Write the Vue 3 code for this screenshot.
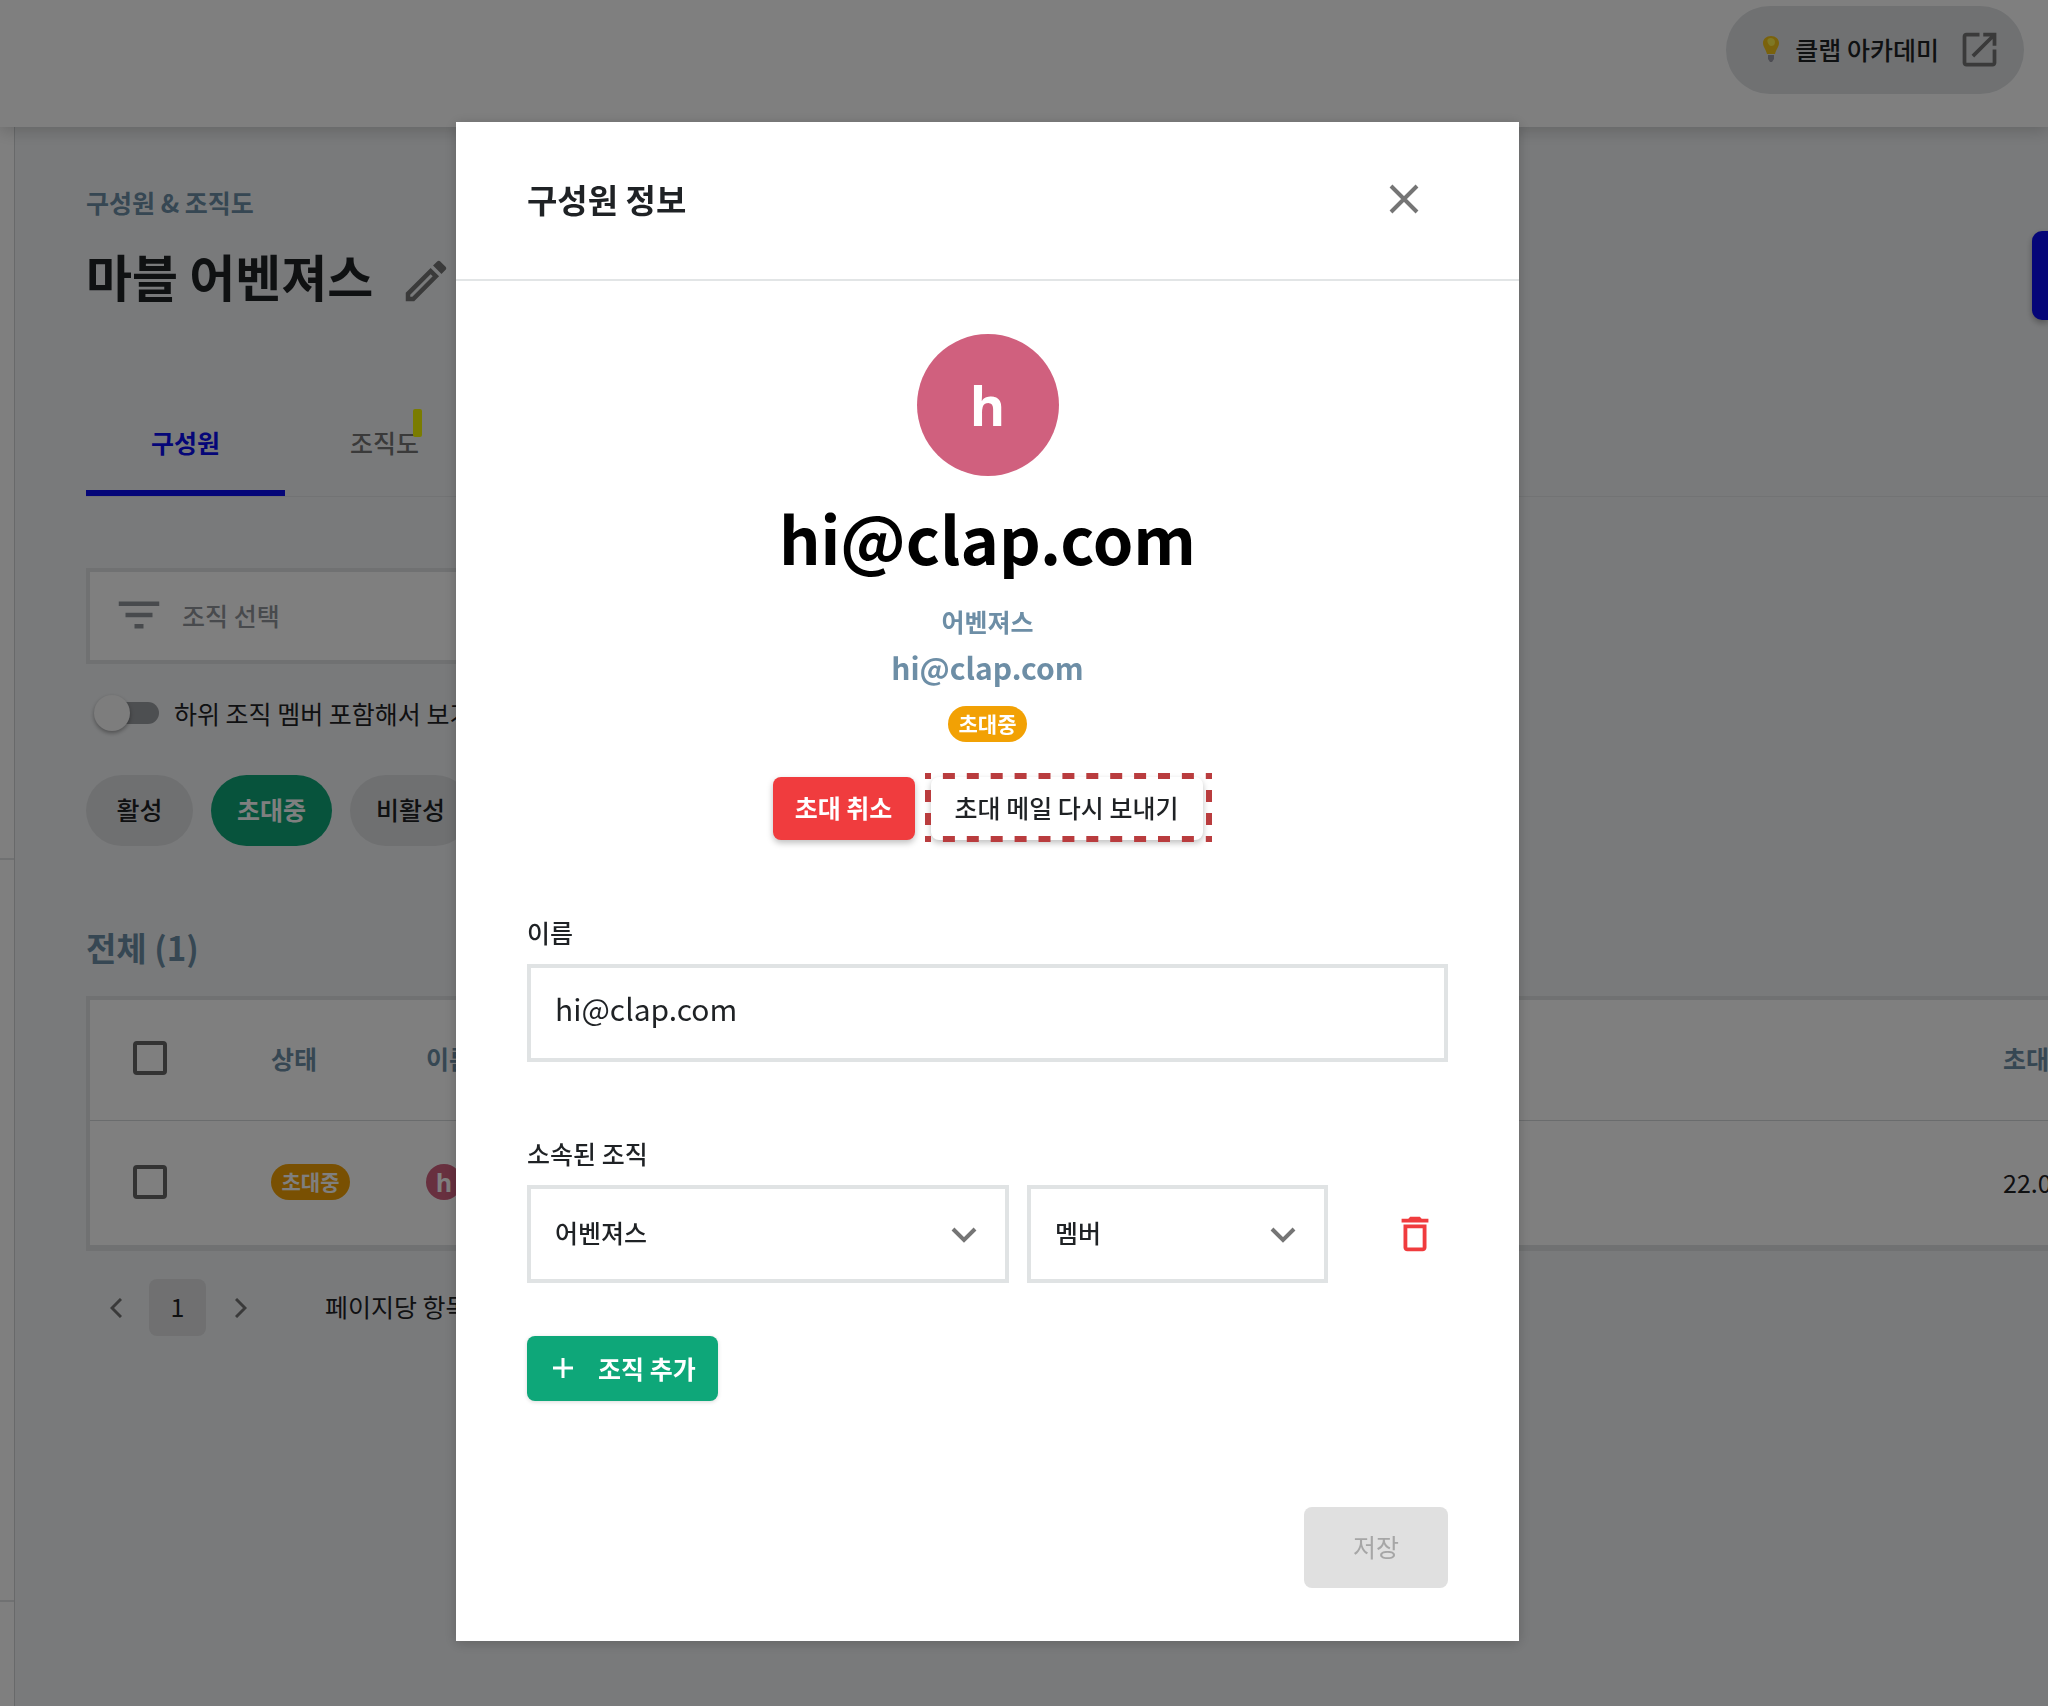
<script setup>
import { ref } from 'vue';

const name = ref('hi@clap.com');
const team = ref('어벤져스');
const role = ref('멤버');
const includeSub = ref(false);

const tabs = ['구성원', '조직도'];
const activeTab = ref('구성원');

const filters = ['활성', '초대중', '비활성'];
const activeFilter = ref('초대중');
</script>

<template>
    <div class="page">
        <header class="topbar">
            <a href="#" class="academy">
                <svg class="bulb" viewBox="0 0 16 26">
                    <path d="M8 0C3.400 0 0 3 0 7c0 4 3 6.500 4 11h8c1-4.500 4-7 4-11 0-4-3.400-7-8-7z" fill="#f5c518" />
                    <path d="M5 3c2-2 7-1 7 3 0 3-2 4-4 4S3 5 5 3z" fill="#fff04a" />
                    <path d="M5 19h6v4l-2 3H7l-2-3z" fill="#9a9aa6" />
                </svg>
                <span>클랩 아카데미</span>
                <svg class="open-icon" viewBox="0 0 24 24">
                    <path d="M19 19H5V5h7V3H5c-1.110 0-2 .9-2 2v14c0 1.100.89 2 2 2h14c1.100 0 2-.9 2-2v-7h-2v7zM14 3v2h3.590l-9.830 9.830 1.410 1.410L19 6.410V10h2V3h-7z" />
                </svg>
            </a>
        </header>

        <div class="body">
            <aside class="side">
                <div class="side-menu"></div>
                <div class="side-extra"></div>
            </aside>

            <main class="content">
                <div class="crumb">구성원 &amp; 조직도</div>
                <div class="title-row">
                    <h1>마블 어벤져스</h1>
                    <button class="icon-btn edit" aria-label="edit">
                        <svg class="edit-icon" viewBox="0 0 24 24">
                            <path d="M14.060 9.020l.92.92L5.920 19H5v-.92l9.060-9.060M17.660 3c-.25 0-.51.1-.7.29l-1.830 1.830 3.750 3.750 1.830-1.830c.39-.39.39-1.020 0-1.410l-2.340-2.340c-.2-.2-.45-.29-.71-.29zm-3.600 3.190L3 17.250V21h3.750L17.810 9.940l-3.750-3.750z" />
                        </svg>
                    </button>
                    <button class="invite" aria-label="invite"></button>
                </div>

                <nav class="tabs">
                    <button
                        v-for="tab in tabs"
                        :key="tab"
                        class="tab"
                        :class="{ active: tab === activeTab }"
                        @click="activeTab = tab"
                    >{{ tab }}</button>
                    <span class="marker"></span>
                </nav>

                <button class="team-filter">
                    <svg viewBox="0 0 24 24"><path d="M10 18h4v-2h-4v2zM3 6v2h18V6H3zm3 7h12v-2H6v2z" /></svg>
                    조직 선택
                </button>

                <label class="switch">
                    <input v-model="includeSub" type="checkbox">
                    <span class="track"></span>
                    하위 조직 멤버 포함해서 보기
                </label>

                <div class="chips">
                    <button
                        v-for="f in filters"
                        :key="f"
                        class="chip"
                        :class="{ active: f === activeFilter }"
                        @click="activeFilter = f"
                    >{{ f }}</button>
                </div>

                <h2 class="total">전체 (1)</h2>

                <table class="members">
                    <thead>
                        <tr>
                            <th class="col-check"><input type="checkbox" aria-label="all"></th>
                            <th class="col-state">상태</th>
                            <th>이름</th>
                            <th class="col-date">초대</th>
                        </tr>
                    </thead>
                    <tbody>
                        <tr>
                            <td class="col-check"><input type="checkbox" aria-label="hi@clap.com"></td>
                            <td class="col-state"><span class="badge">초대중</span></td>
                            <td><span class="avatar small">h</span></td>
                            <td class="col-date">22.0</td>
                        </tr>
                    </tbody>
                </table>

                <div class="pager">
                    <button class="page-arrow" aria-label="prev">
                        <svg viewBox="0 0 12 20"><path d="M11 1L2 10l9 9" /></svg>
                    </button>
                    <button class="page-num">1</button>
                    <button class="page-arrow" aria-label="next">
                        <svg viewBox="0 0 12 20"><path d="M1 1l9 9-9 9" /></svg>
                    </button>
                    <span class="per-page">페이지당 항목</span>
                </div>
            </main>
        </div>

        <div class="overlay">
            <section class="modal" role="dialog" aria-labelledby="modal-title">
                <header class="modal-head">
                    <h2 id="modal-title">구성원 정보</h2>
                    <button class="icon-btn" aria-label="close">
                        <svg class="close-icon" viewBox="0 0 30 30"><path d="M2 2l26 26M28 2L2 28" /></svg>
                    </button>
                </header>

                <div class="profile">
                    <span class="avatar">h</span>
                    <div class="profile-name">hi@clap.com</div>
                    <div class="profile-team">어벤져스</div>
                    <div class="profile-mail">hi@clap.com</div>
                    <span class="badge">초대중</span>
                    <div class="profile-actions">
                        <button class="btn danger">초대 취소</button>
                        <div class="highlight">
                            <button class="btn plain">초대 메일 다시 보내기</button>
                            <svg class="dashes" viewBox="0 0 287 69">
                                <path d="M0 3h287M0 66h287" stroke-dasharray="12 11.9" />
                                <path d="M3 0v69M284 0v69" stroke-dasharray="12 11" />
                            </svg>
                        </div>
                    </div>
                </div>

                <div class="form">
                    <label for="name" class="label">이름</label>
                    <input id="name" v-model="name" type="text" class="field">

                    <label for="team" class="label second">소속된 조직</label>
                    <div class="team-row">
                        <div class="select team">
                            <select id="team" v-model="team" class="field">
                                <option>어벤져스</option>
                            </select>
                            <svg viewBox="0 0 26 16"><path d="M2 2l11 11L24 2" /></svg>
                        </div>
                        <div class="select role">
                            <select v-model="role" class="field" aria-label="role">
                                <option>멤버</option>
                            </select>
                            <svg viewBox="0 0 26 16"><path d="M2 2l11 11L24 2" /></svg>
                        </div>
                        <button class="icon-btn remove" aria-label="remove">
                            <svg viewBox="0 0 24 24">
                                <path d="M6 19c0 1.100.9 2 2 2h8c1.100 0 2-.9 2-2V7H6v12zM8 9h8v10H8V9zm7.500-5l-1-1h-5l-1 1H5v2h14V4h-3.500z" />
                            </svg>
                        </button>
                    </div>

                    <button class="btn add">
                        <svg viewBox="0 0 20 20"><path d="M10 0v20M0 10h20" /></svg>
                        조직 추가
                    </button>
                </div>

                <footer class="modal-foot">
                    <button class="save" disabled>저장</button>
                </footer>
            </section>
        </div>
    </div>
</template>

<style>
body{
margin:0;
overflow:hidden;
}
</style>

<style scoped>
*{box-sizing:border-box}

.page{
--green:#0ea779;
--blue:#0a0cf0;
--steel:#6d8ea6;
--line:#e0e3e4;
--grey:#757575;
display:flex;
flex-direction:column;
height:100vh;
overflow:hidden;
background:#f3f5f7;
color:#1f2225;
font-family:'Noto Sans CJK KR',sans-serif;
font-size:25px;
line-height:36px;
}

button,input,select{font:inherit;color:inherit;}

button{
border:none;
padding:0;
background:none;
cursor:pointer;
}

h1,h2{margin:0;}

svg{display:block;flex-shrink:0;}

/* top bar */
.topbar{
flex-shrink:0;
display:flex;
justify-content:flex-end;
align-items:flex-start;
height:127px;
padding:6px 24px 0;
background:#fff;
box-shadow:0 4px 16px rgba(0,0,0,0.18);
position:relative;
}

.academy{
display:flex;
align-items:center;
height:88px;
padding:0 22px 2px 37px;
border-radius:44px;
background:#e0e3e5;
color:#1f2225;
font-weight:500;
text-decoration:none;
}

.bulb{width:16px;height:26px;margin-right:16px;}
.open-icon{width:45px;height:45px;margin-left:18px;fill:var(--grey);}

.body{
display:flex;
flex:1;
min-height:0;
}

.side{
flex-shrink:0;
width:15px;
background:#fff;
border-right:1px solid #d0d3d5;
}

.side-menu{height:733px;border-bottom:2px solid var(--line);}
.side-extra{height:742px;border-bottom:2px solid var(--line);}

.content{
flex:1;
min-width:0;
padding:57px 0 0 71px;
overflow:hidden;
}

.crumb{color:var(--steel);font-weight:700;}

.title-row{
display:flex;
align-items:center;
height:72px;
margin-top:19px;
}

.title-row h1{
font-size:50px;
font-weight:700;
line-height:72px;
}

.edit{align-self:flex-end;margin-left:26px;}
.edit-icon{width:54px;height:60px;fill:var(--grey);}

.invite{
width:16px;
height:89px;
margin-left:auto;
border-radius:10px 0 0 10px;
background:var(--blue);
box-shadow:0 3px 6px rgba(0,0,0,0.3);
}

.tabs{
display:flex;
height:107px;
margin-top:79px;
border-bottom:1px solid #e4e7e9;
position:relative;
}

.tab{
width:199px;
padding-bottom:3px;
color:var(--grey);
font-weight:500;
}

.tab.active{
color:var(--blue);
font-weight:700;
box-shadow:inset 0 -6px 0 var(--blue);
}

.marker{
position:absolute;
left:327px;
top:19px;
width:9px;
height:28px;
border-radius:2px;
background:#f5f800;
}

.team-filter{
display:flex;
align-items:center;
gap:16px;
width:600px;
height:96px;
margin-top:71px;
padding:0 22px 2px;
border:4px solid var(--line);
background:#fff;
color:#90959a;
font-weight:500;
}

.team-filter svg{width:54px;height:54px;fill:#90959a;}

.switch{
display:flex;
align-items:center;
height:50px;
margin-top:24px;
padding-left:12px;
}

.switch input{
position:absolute;
opacity:0;
}

.track{
position:relative;
width:61px;
height:22px;
margin-right:15px;
border-radius:11px;
background:#9b9ea2;
}

.track::before{
content:'';
position:absolute;
left:-4px;
top:-7px;
width:36px;
height:36px;
border-radius:50%;
background:#fafafa;
box-shadow:0 2px 4px rgba(0,0,0,0.35);
}

.switch input:checked + .track::before{left:29px;}

.chips{
display:flex;
gap:18px;
margin-top:37px;
}

.chip{
min-width:107px;
height:71px;
padding:0 26px 4px;
border-radius:36px;
background:#dfe1e3;
font-weight:500;
}

.chip.active{
background:var(--green);
color:#fff;
font-weight:700;
}

.total{
margin-top:77px;
color:var(--steel);
font-size:33px;
font-weight:700;
line-height:48px;
}

.members{
width:calc(100% + 120px);
margin-top:25px;
border:4px solid var(--line);
border-bottom-width:6px;
border-collapse:separate;
border-spacing:0;
background:#fff;
table-layout:fixed;
}

.members th,
.members td{
height:124px;
padding:0 0 2px;
text-align:left;
}

.members th{
height:121px;
padding-bottom:4px;
border-bottom:1px solid #d5d8da;
color:var(--steel);
font-weight:700;
}

.members .col-check{width:181px;padding-left:43px;}
.members .col-state{width:155px;}
.members .col-date{width:161px;}

.members input{
display:block;
appearance:none;
width:34px;
height:34px;
margin:0;
border:4px solid #666;
border-radius:4px;
}

.badge{
display:flex;
align-items:center;
justify-content:center;
width:79px;
height:36px;
padding-bottom:2px;
border-radius:18px;
background:#f2a104;
color:#fff;
font-size:21px;
font-weight:700;
}

.avatar{
display:flex;
align-items:center;
justify-content:center;
width:142px;
height:142px;
border-radius:50%;
background:#d0607e;
color:#fff;
font-family:'Open Sans',sans-serif;
font-size:54px;
font-weight:700;
}

.avatar.small{
width:36px;
height:36px;
font-size:25px;
}

.pager{
display:flex;
align-items:center;
margin-top:28px;
padding-left:24px;
}

.page-arrow svg{
width:12px;
height:20px;
fill:none;
stroke:var(--grey);
stroke-width:3;
}

.page-num{
width:57px;
height:57px;
margin:0 29px 0 27px;
padding-bottom:4px;
border-radius:8px;
background:#e0e1e3;
}

.per-page{margin-left:78px;padding-bottom:4px;}

/* dialog */
.overlay{
position:fixed;
inset:0;
display:flex;
justify-content:center;
align-items:flex-start;
padding:122px 73px 0 0;
background:rgba(0,0,0,0.5);
}

.modal{
width:1063px;
background:#fff;
box-shadow:0 2px 12px rgba(0,0,0,0.2);
}

.modal-head{
display:flex;
align-items:center;
justify-content:space-between;
height:159px;
padding:0 100px 4px 71px;
border-bottom:2px solid #e2e5e6;
}

.modal-head h2{
font-size:33px;
font-weight:700;
line-height:48px;
}

.close-icon{
width:30px;
height:30px;
fill:none;
stroke:var(--grey);
stroke-width:4;
}

.profile{
display:flex;
flex-direction:column;
align-items:center;
padding-top:53px;
}

.profile-name{
margin-top:13px;
color:#000;
font-size:65px;
font-weight:700;
line-height:96px;
}

.profile-team{
margin-top:18px;
color:var(--steel);
font-weight:700;
}

.profile-mail{
margin-top:4px;
color:var(--steel);
font-size:30px;
font-weight:700;
line-height:48px;
}

.profile .badge{margin-top:15px;}

.profile-actions{
display:flex;
gap:16px;
margin-top:35px;
}

.btn{
height:63px;
padding-bottom:4px;
border-radius:8px;
color:#fff;
font-weight:700;
box-shadow:0 3px 6px rgba(0,0,0,0.25);
}

.danger{width:142px;background:#f03c3e;}

.plain{
width:272px;
background:#fff;
color:#1f2225;
font-weight:500;
}

.highlight{position:relative;}

.dashes{
position:absolute;
left:-6px;
top:-4px;
width:287px;
height:69px;
fill:none;
stroke:#b93c3e;
stroke-width:6;
stroke-dashoffset:6;
pointer-events:none;
}

.form{padding:74px 71px 0;}

.label{
display:block;
margin-bottom:14px;
font-weight:500;
}

.label.second{margin-top:73px;}

.field{
display:block;
width:100%;
height:98px;
padding:0 24px 4px;
border:4px solid var(--line);
border-radius:0;
background:#fff;
font-weight:500;
outline:none;
}

input.field{
padding-bottom:10px;
font-size:30px;
font-weight:400;
}

.team-row{
display:flex;
align-items:center;
gap:18px;
}

.select{position:relative;}
.select.team{width:482px;}
.select.role{width:301px;}

.select select{appearance:none;}

.select svg{
position:absolute;
right:32px;
top:42px;
width:26px;
height:16px;
fill:none;
stroke:var(--grey);
stroke-width:4;
pointer-events:none;
}

.remove{margin-left:auto;margin-right:10px;}
.remove svg{width:46px;height:46px;fill:#f03c3e;}

.add{
display:flex;
align-items:center;
gap:25px;
height:65px;
margin-top:53px;
padding:0 22px 2px 26px;
background:var(--green);
box-shadow:0 1px 4px rgba(0,0,0,0.15);
}

.add svg{
width:20px;
height:20px;
fill:none;
stroke:#fff;
stroke-width:3;
}

.modal-foot{
display:flex;
justify-content:flex-end;
padding:106px 71px 53px;
}

.save{
width:144px;
height:81px;
padding-bottom:4px;
border-radius:8px;
background:#e0e0e0;
color:#a6a6a6;
}
</style>
